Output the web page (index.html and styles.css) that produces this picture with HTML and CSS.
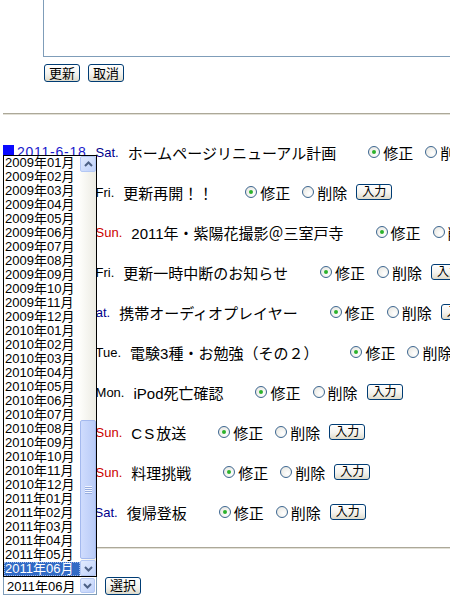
FILE: index.html
```html
<!DOCTYPE html>
<html lang="ja">
<head>
    <meta charset="UTF-8">
    <meta name="viewport" content="width=device-width, initial-scale=1.0">
    <title>日記の編集</title>
    <link rel="stylesheet" href="styles.css">
</head>
<body>
    <div class="page">
        <!-- 編集欄 -->
        <div class="edit">
            <textarea class="memo"></textarea>
            <div class="edit-btns">
                <button class="btn">更新</button>
                <button class="btn">取消</button>
            </div>
        </div>
        <div class="rule top"></div>

        <!-- 記事一覧 -->
        <ul class="entries">
            <li class="entry">
                <span class="mark"></span><a class="date" href="#">2011-6-18</a><span class="dow sat">Sat.</span>
                <span class="title">ホームページリニューアル計画</span>
                <label class="opt"><span class="radio on"></span>修正</label>
                <label class="opt"><span class="radio"></span>削除</label>
                <button class="btn small">入力</button>
            </li>
            <li class="entry">
                <span class="mark"></span><a class="date" href="#">2011-6-17</a><span class="dow">Fri.</span>
                <span class="title">更新再開！！</span>
                <label class="opt"><span class="radio on"></span>修正</label>
                <label class="opt"><span class="radio"></span>削除</label>
                <button class="btn small">入力</button>
            </li>
            <li class="entry">
                <span class="mark"></span><a class="date" href="#">2011-6-12</a><span class="dow sun">Sun.</span>
                <span class="title">2011年・紫陽花撮影＠三室戸寺</span>
                <label class="opt"><span class="radio on"></span>修正</label>
                <label class="opt"><span class="radio"></span>削除</label>
                <button class="btn small">入力</button>
            </li>
            <li class="entry">
                <span class="mark"></span><a class="date" href="#">2011-6-10</a><span class="dow">Fri.</span>
                <span class="title">更新一時中断のお知らせ</span>
                <label class="opt"><span class="radio on"></span>修正</label>
                <label class="opt"><span class="radio"></span>削除</label>
                <button class="btn small">入力</button>
            </li>
            <li class="entry">
                <span class="mark"></span><a class="date" href="#">2011-6-4</a><span class="dow sat">Sat.</span>
                <span class="title">携帯オーディオプレイヤー</span>
                <label class="opt"><span class="radio on"></span>修正</label>
                <label class="opt"><span class="radio"></span>削除</label>
                <button class="btn small">入力</button>
            </li>
            <li class="entry">
                <span class="mark"></span><a class="date" href="#">2011-6-14</a><span class="dow">Tue.</span>
                <span class="title">電験3種・お勉強（その２）</span>
                <label class="opt"><span class="radio on"></span>修正</label>
                <label class="opt"><span class="radio"></span>削除</label>
                <button class="btn small">入力</button>
            </li>
            <li class="entry">
                <span class="mark"></span><a class="date" href="#">2011-6-13</a><span class="dow">Mon.</span>
                <span class="title">iPod死亡確認</span>
                <label class="opt"><span class="radio on"></span>修正</label>
                <label class="opt"><span class="radio"></span>削除</label>
                <button class="btn small">入力</button>
            </li>
            <li class="entry">
                <span class="mark"></span><a class="date" href="#">2011-6-12</a><span class="dow sun">Sun.</span>
                <span class="title"><span class="wide">CS</span>放送</span>
                <label class="opt"><span class="radio on"></span>修正</label>
                <label class="opt"><span class="radio"></span>削除</label>
                <button class="btn small">入力</button>
            </li>
            <li class="entry">
                <span class="mark"></span><a class="date" href="#">2011-6-05</a><span class="dow sun">Sun.</span>
                <span class="title">料理挑戦</span>
                <label class="opt"><span class="radio on"></span>修正</label>
                <label class="opt"><span class="radio"></span>削除</label>
                <button class="btn small">入力</button>
            </li>
            <li class="entry">
                <span class="mark"></span><a class="date" href="#">2011-6-11</a><span class="dow sat">Sat.</span>
                <span class="title">復帰登板</span>
                <label class="opt"><span class="radio on"></span>修正</label>
                <label class="opt"><span class="radio"></span>削除</label>
                <button class="btn small">入力</button>
            </li>
        </ul>
        <div class="rule bottom"></div>

        <!-- 月の選択 -->
        <div class="month-bar">
            <div class="select">
                <span class="select-text">2011年06月</span>
                <span class="arrow-btn">
                    <svg width="13" height="13" viewBox="0 0 13 13"><path d="M3 5 L6.5 8.5 L10 5" fill="none" stroke="#4d6185" stroke-width="2"/></svg>
                </span>
            </div>
            <button class="btn">選択</button>
        </div>

        <!-- 開いたドロップダウン -->
        <div class="month-list">
            <ul class="months">
                <li>2009年01月</li>
                <li>2009年02月</li>
                <li>2009年03月</li>
                <li>2009年04月</li>
                <li>2009年05月</li>
                <li>2009年06月</li>
                <li>2009年07月</li>
                <li>2009年08月</li>
                <li>2009年09月</li>
                <li>2009年10月</li>
                <li>2009年11月</li>
                <li>2009年12月</li>
                <li>2010年01月</li>
                <li>2010年02月</li>
                <li>2010年03月</li>
                <li>2010年04月</li>
                <li>2010年05月</li>
                <li>2010年06月</li>
                <li>2010年07月</li>
                <li>2010年08月</li>
                <li>2010年09月</li>
                <li>2010年10月</li>
                <li>2010年11月</li>
                <li>2010年12月</li>
                <li>2011年01月</li>
                <li>2011年02月</li>
                <li>2011年03月</li>
                <li>2011年04月</li>
                <li>2011年05月</li>
                <li class="current">2011年06月</li>
            </ul>
            <div class="scroll">
                <span class="arrow-btn">
                    <svg width="13" height="13" viewBox="0 0 13 13"><path d="M3 8 L6.5 4.5 L10 8" fill="none" stroke="#4d6185" stroke-width="2"/></svg>
                </span>
                <div class="scroll-track">
                    <div class="scroll-thumb"><span class="grip"></span></div>
                </div>
                <span class="arrow-btn">
                    <svg width="13" height="13" viewBox="0 0 13 13"><path d="M3 5 L6.5 8.5 L10 5" fill="none" stroke="#4d6185" stroke-width="2"/></svg>
                </span>
            </div>
        </div>
    </div>
</body>
</html>
```

FILE: styles.css
```css
* {
    padding: 0;
    margin: 0;
    box-sizing: border-box;
}
html, body {
    overflow: hidden;
}
body {
    background: #fff;
    color: #000;
    font-family: "Liberation Sans", "Noto Sans CJK JP", sans-serif;
    font-size: 15px;
}
.page {
    position: relative;
    width: 640px;
    padding-left: 3px;
}
.edit {
    margin-left: 40px;
}
.memo {
    display: block;
    width: 600px;
    height: 57px;
    border: 1px solid #7f9db9;
    border-top: none;
    resize: none;
}
.edit-btns {
    display: flex;
    gap: 8px;
    margin-top: 7px;
    margin-left: 1px;
}
.btn {
    display: inline-flex;
    align-items: center;
    justify-content: center;
    width: 36px;
    height: 18px;
    font: 13px "Liberation Sans", "Noto Sans CJK JP", sans-serif;
    line-height: 1;
    color: #000;
    border: 1px solid #003c74;
    border-radius: 3px;
    background: linear-gradient(#ffffff, #f4f3ee 55%, #dedbcc);
}
.btn.small {
    height: 16px;
    font-size: 12px;
    margin-left: 9px;
}
.rule {
    height: 2px;
    border-top: 1px solid #aca899;
    border-bottom: 1px solid #e2e0d6;
}
.rule.top {
    margin-top: 31px;
}
.rule.bottom {
    margin-top: 15px;
}
.entries {
    list-style: none;
    margin-top: 17px;
}
.entry {
    display: flex;
    align-items: center;
    height: 40px;
    white-space: nowrap;
}
.mark {
    width: 11px;
    height: 12px;
    margin-right: 3px;
    margin-top: -2px;
    background: #0a0aff;
}
.date {
    font-size: 14px;
    letter-spacing: 0.75px;
    color: #1a1acc;
}
.dow {
    margin-left: 9px;
    font-size: 13px;
}
.dow.sat {
    color: #00008b;
}
.dow.sun {
    color: #cc0000;
}
.title {
    margin-left: 9px;
    margin-right: 32px;
}
.wide {
    letter-spacing: 2px;
}
.opt {
    display: inline-flex;
    align-items: center;
}
.opt + .opt {
    margin-left: 12px;
}
.radio {
    position: relative;
    width: 12px;
    height: 12px;
    margin-right: 3px;
    border: 1px solid #3c6690;
    border-radius: 50%;
    background: radial-gradient(circle at 65% 65%, #ffffff, #e4e3dc);
}
.radio.on::after {
    content: "";
    position: absolute;
    left: 3px;
    top: 3px;
    width: 4px;
    height: 4px;
    border-radius: 50%;
    background: #2cb22c;
}
.month-bar {
    display: flex;
    align-items: center;
    gap: 8px;
    margin-top: 27px;
}
.select {
    display: flex;
    align-items: center;
    justify-content: space-between;
    width: 94px;
    height: 19px;
    padding: 1px;
    border: 1px solid #7f9db9;
    font-size: 13px;
}
.select-text {
    padding-left: 2px;
}
.arrow-btn {
    display: flex;
    align-items: center;
    justify-content: center;
    width: 16px;
    height: 16px;
    border: 1px solid #b4c8f4;
    border-radius: 2px;
    background: linear-gradient(135deg, #e2ebfe, #bfd1fa);
}
.select .arrow-btn {
    width: 15px;
    height: 15px;
}
.month-list {
    position: absolute;
    left: 3px;
    top: 155px;
    display: flex;
    width: 94px;
    height: 422px;
    border: 1px solid #000;
    background: #fff;
    font-size: 13px;
}
.months {
    flex: 1;
    list-style: none;
}
.months li {
    height: 14px;
    line-height: 14px;
    padding-left: 1px;
    white-space: nowrap;
}
.months li.current {
    background: #316ac5;
    color: #fff;
    outline: 1px dotted #9fb8e8;
    outline-offset: -1px;
}
.scroll {
    display: flex;
    flex-direction: column;
    width: 16px;
    background: linear-gradient(to right, #fdfdfa, #ecebe3);
}
.scroll-track {
    flex: 1;
    display: flex;
    flex-direction: column;
    justify-content: flex-end;
}
.scroll-thumb {
    display: flex;
    align-items: center;
    justify-content: center;
    height: 139px;
    margin-bottom: 1px;
    border: 1px solid #a4b9ee;
    border-radius: 2px;
    background: linear-gradient(to right, #cfdcfd, #b9cbf7);
}
.grip {
    width: 7px;
    height: 8px;
    background: repeating-linear-gradient(#f2f5ff 0 1px, #97addf 1px 2px);
}
```
